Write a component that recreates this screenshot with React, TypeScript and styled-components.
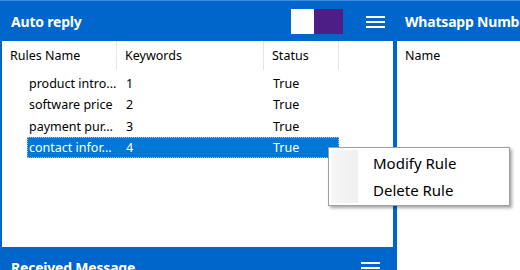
import React, { FC } from 'react';
import styled, { createGlobalStyle } from 'styled-components';

const GlobalStyle = createGlobalStyle`
  html, body {
    margin: 0;
    padding: 0;
    background: #0066cc;
    overflow: hidden;
  }
  body {
    font-family: 'Noto Sans', 'Open Sans', sans-serif;
  }
`;

interface Rule {
  name: string;
  keyword: string;
  status: string;
}

const rules: Rule[] = [
  { name: 'product intro...', keyword: '1', status: 'True' },
  { name: 'software price', keyword: '2', status: 'True' },
  { name: 'payment pur...', keyword: '3', status: 'True' },
  { name: 'contact infor...', keyword: '4', status: 'True' },
];

const MenuIcon: FC = () => (
  <svg width="19" height="12" viewBox="0 0 19 12">
    <rect x="0" y="0" width="19" height="2" fill="#fff" />
    <rect x="0" y="5" width="19" height="2" fill="#fff" />
    <rect x="0" y="10" width="19" height="2" fill="#fff" />
  </svg>
);

const App: FC = () => {
  const selected = 3;

  return (
    <>
      <GlobalStyle />
      <Page>
        <LeftPanel>
          <Header>
            <Title>Auto reply</Title>
            <HeaderTools>
              <Swatches>
                <Swatch color="#ffffff" width={23} />
                <Swatch color="#4d1e86" width={29} />
              </Swatches>
              <IconSlot right={12}>
                <MenuIcon />
              </IconSlot>
            </HeaderTools>
          </Header>
          <ListBox>
            <ColumnHeader>
              <HeadCell>Rules Name</HeadCell>
              <HeadCell>Keywords</HeadCell>
              <HeadCell>Status</HeadCell>
              <HeadCell />
            </ColumnHeader>
            <Rows>
              {rules.map((r, i) => (
                <Row key={r.name} selected={i === selected}>
                  <NameCell>{r.name}</NameCell>
                  <SubCell>{r.keyword}</SubCell>
                  <SubCell>{r.status}</SubCell>
                </Row>
              ))}
            </Rows>
          </ListBox>
          <Header>
            <Title>Received Message</Title>
            <IconSlot right={17}>
              <MenuIcon />
            </IconSlot>
          </Header>
        </LeftPanel>
        <RightPanel>
          <Header>
            <Title>Whatsapp Number</Title>
          </Header>
          <RightBody>
            <RightHead>Name</RightHead>
          </RightBody>
        </RightPanel>
        <ContextMenu>
          <Gutter />
          <MenuItems>
            <MenuItem>Modify Rule</MenuItem>
            <MenuItem>Delete Rule</MenuItem>
          </MenuItems>
        </ContextMenu>
      </Page>
    </>
  );
};

export default App;

const Page = styled.div`
  position: relative;
  display: grid;
  grid-template-columns: 397px 1fr;
  width: 520px;
  height: 270px;
  overflow: hidden;
  border-top: 1px solid #3f8ddb;
  box-sizing: border-box;
`;

const LeftPanel = styled.div`
  display: flex;
  flex-direction: column;
  min-width: 0;
`;

const Header = styled.div`
  flex: none;
  height: 40px;
  display: flex;
  align-items: center;
  justify-content: space-between;
  padding-left: 11px;
  background: #0066cc;
  white-space: nowrap;
  overflow: hidden;
`;

const Title = styled.div`
  color: #fff;
  font-weight: 700;
  font-size: 14px;
  letter-spacing: -0.2px;
`;

const HeaderTools = styled.div`
  display: flex;
  align-items: center;
`;

const Swatches = styled.div`
  display: flex;
  height: 25px;
  margin-right: 23px;
`;

const Swatch = styled.div<{ color: string; width: number }>`
  width: ${({ width }) => width}px;
  height: 100%;
  background: ${({ color }) => color};
`;

const IconSlot = styled.div<{ right: number }>`
  display: flex;
  margin-right: ${({ right }) => right}px;
  margin-top: 1px;
`;

const ListBox = styled.div`
  height: 206px;
  margin: 0 4px 0 2px;
  background: #fff;
  font-size: 12.5px;
  color: #000;
`;

const ColumnHeader = styled.div`
  display: grid;
  grid-template-columns: 115px 147px 75px 1fr;
  height: 29px;
`;

const HeadCell = styled.div`
  display: flex;
  align-items: center;
  padding-left: 8px;
  border-right: 1px solid #e5e5e5;
  white-space: nowrap;

  &:last-child {
    border-right: none;
  }
`;

const Rows = styled.div`
  display: flex;
  flex-direction: column;
  padding: 3px 0 0 25px;
`;

const Row = styled.div<{ selected?: boolean }>`
  display: grid;
  grid-template-columns: 90px 147px 75px;
  width: 312px;
  height: 21.3px;
  align-items: center;
  box-sizing: border-box;
  background: ${({ selected }) => (selected ? '#0078d7' : 'transparent')};
  color: ${({ selected }) => (selected ? '#fff' : '#000')};
  outline: ${({ selected }) => (selected ? '1px dotted #99c4ee' : 'none')};
  outline-offset: -1px;
  white-space: nowrap;
`;

const NameCell = styled.div`
  padding-left: 2px;
`;

const SubCell = styled.div`
  padding-left: 9px;
`;

const RightPanel = styled.div`
  display: flex;
  flex-direction: column;
  min-width: 0;

  ${Header} {
    padding-left: 8px;
  }
`;

const RightBody = styled.div`
  flex: 1;
  background: #fff;
  font-size: 12.5px;
`;

const RightHead = styled.div`
  height: 29px;
  display: flex;
  align-items: center;
  padding-left: 8px;
`;

const ContextMenu = styled.div`
  position: absolute;
  left: 328px;
  top: 146px;
  width: 182px;
  height: 59px;
  box-sizing: border-box;
  display: flex;
  padding: 2px;
  background: #fff;
  border: 1px solid #a0a0a0;
  box-shadow: 2px 2px 3px rgba(0, 0, 0, 0.35);
`;

const Gutter = styled.div`
  width: 27px;
  background: linear-gradient(to right, #f7f7f7, #efefef);
  border-right: 1px solid #fff;
`;

const MenuItems = styled.div`
  display: flex;
  flex-direction: column;
  flex: 1;
`;

const MenuItem = styled.div`
  height: 27px;
  display: flex;
  align-items: center;
  padding-left: 14px;
  font-size: 15px;
  color: #000;
`;
